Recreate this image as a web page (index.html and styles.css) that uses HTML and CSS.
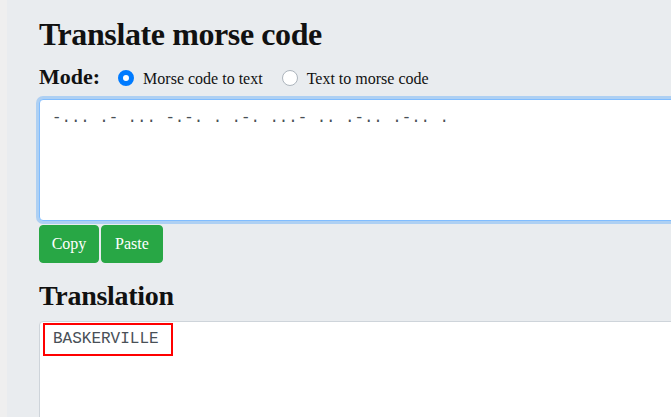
FILE: index.html
```html
<!DOCTYPE html>
<html>
<head>
<meta charset="utf-8">
<link rel="stylesheet" href="styles.css">
</head>
<body>
<div class="page">
  <h1 class="title">Translate morse code</h1>
  <div class="mode">
    <span class="mode-label">Mode:</span>
    <label class="radio"><span class="dot dot-on"></span><span class="radio-text">Morse code to text</span></label>
    <label class="radio"><span class="dot"></span><span class="radio-text">Text to morse code</span></label>
  </div>
  <div class="input">-... .- ... -.-. . .-. ...- .. .-.. .-.. .</div>
  <div class="buttons">
    <button class="btn btn-copy">Copy</button>
    <button class="btn btn-paste">Paste</button>
  </div>
  <h2 class="subtitle">Translation</h2>
  <div class="output">
    <div class="result">BASKERVILLE</div>
  </div>
</div>
</body>
</html>
```

FILE: styles.css
```css
html, body {
  margin: 0;
  padding: 0;
  height: 100%;
  overflow: hidden;
}
body {
  background: #efefef;
  font-family: "Liberation Serif", serif;
  color: #111;
}
.page {
  margin-left: 7px;
  background: #e9ecef;
  height: 100%;
  padding-left: 32px;
  padding-top: 15px;
  box-sizing: border-box;
  width: 900px;
}
.title {
  margin: 0;
  font-size: 32px;
  line-height: 1.2;
  font-weight: bold;
  letter-spacing: -0.4px;
}
.mode {
  margin-top: 11px;
  display: flex;
  align-items: baseline;
  line-height: 1.2;
}
.mode-label {
  font-size: 22px;
  font-weight: bold;
  margin-right: 18px;
}
.radio {
  font-size: 16px;
  margin-right: 19px;
}
.dot {
  display: inline-block;
  width: 16px;
  height: 16px;
  box-sizing: border-box;
  border-radius: 50%;
  background: #fff;
  border: 1px solid #adb5bd;
  vertical-align: -2px;
  margin-right: 9px;
}
.dot-on {
  border: 5px solid #007bff;
  background: #fff;
}
.input {
  margin-top: 8px;
  width: 700px;
  height: 122px;
  box-sizing: border-box;
  background: #fff;
  border: 1px solid #80bdff;
  border-radius: 4px;
  box-shadow: 0 0 0 3px rgba(0, 123, 255, 0.25);
  padding: 6px 12px;
  font-family: "Liberation Mono", monospace;
  font-size: 15.75px;
  line-height: 24px;
  color: #495057;
}
.buttons {
  margin-top: 4px;
  display: flex;
  gap: 2px;
}
.btn {
  height: 38px;
  padding: 0;
  background: #28a745;
  border: 1px solid #28a745;
  border-radius: 4px;
  color: #fff;
  font-family: "Liberation Serif", serif;
  font-size: 16px;
}
.btn-copy {
  width: 60px;
}
.btn-paste {
  width: 62px;
}
.subtitle {
  margin: 16px 0 0;
  font-size: 28px;
  line-height: 1.2;
  font-weight: bold;
  letter-spacing: -0.3px;
}
.output {
  margin-top: 9px;
  width: 700px;
  height: 200px;
  box-sizing: border-box;
  background: #fff;
  border: 1px solid #ced4da;
  border-radius: 4px;
  padding: 1px 0 0 3px;
}
.result {
  display: inline-block;
  border: 2px solid #f00;
  padding: 5px 12px 5px 8px;
  font-family: "Liberation Mono", monospace;
  font-size: 16px;
  line-height: 19px;
  color: #495057;
}
```
